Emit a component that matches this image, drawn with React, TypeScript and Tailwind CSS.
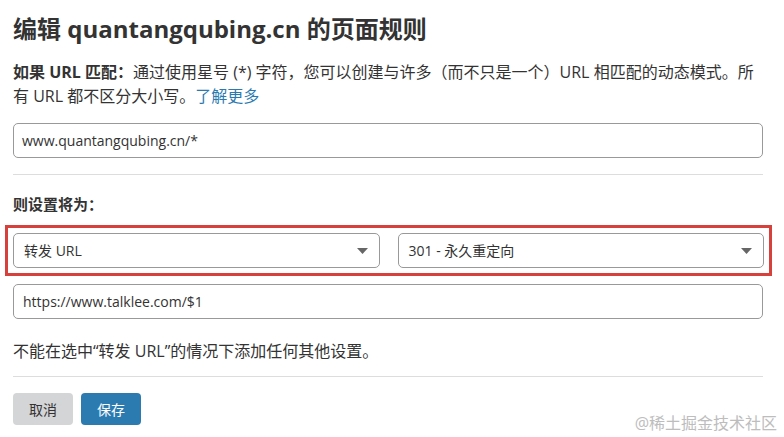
import React from "react";

const font = { fontFamily: '"Open Sans", "Noto Sans CJK SC", sans-serif' };

function Caret() {
  return (
    <svg width="11" height="6" viewBox="0 0 11 6" className="shrink-0">
      <path d="M0 0 L11 0 L5.5 6 Z" fill="#666" />
    </svg>
  );
}

function Select({ label }: { label: string }) {
  return (
    <div className="flex-1 h-[35px] rounded-[5px] border border-[#999] flex items-center justify-between pl-[10px] pr-[11px] text-[14px] text-[#333]">
      <span>{label}</span>
      <Caret />
    </div>
  );
}

export default function App() {
  return (
    <div className="relative w-[784px] h-[437px] bg-white overflow-hidden text-[#333]" style={font}>
      <div className="pl-[13px] pr-[21px] pt-[12px]">
        <h1 className="text-[24px] leading-[34px] font-bold text-[#333]">编辑 quantangqubing.cn 的页面规则</h1>
        <p className="mt-[14px] text-[16px] leading-[24px]">
          <b>如果 URL 匹配：</b>通过使用星号 (*) 字符，您可以创建与许多（而不只是一个）URL 相匹配的动态模式。所有 URL 都不区分大小写。<span className="text-[#2a7ab0]">了解更多</span>
        </p>
        <div className="mt-[15px] h-[35px] rounded-[5px] border border-[#999] flex items-center pl-[8px] text-[14px]">
          www.quantangqubing.cn/*
        </div>
        <div className="mt-[16px] border-t border-[#ddd]" />
        <div className="mt-[17px] text-[15px] leading-[24px] font-bold">则设置将为：</div>
        <div className="mt-[9px] -ml-[8px] -mr-[9px] border-[3px] border-[#d7413c] px-[5px] py-[5px] flex gap-[18px]">
          <Select label="转发 URL" />
          <Select label="301 - 永久重定向" />
        </div>
        <div className="mt-[8px] h-[35px] rounded-[5px] border border-[#999] flex items-center pl-[9px] text-[14px]">
          https://www.talklee.com/$1
        </div>
        <p className="mt-[21px] text-[16px] leading-[22px]">不能在选中“转发 URL”的情况下添加任何其他设置。</p>
        <div className="mt-[14px] border-t border-[#ddd]" />
        <div className="mt-[16px] flex gap-[8px]">
          <button className="w-[60px] h-[32px] rounded-[4px] bg-[#d4d5d7] text-[#333] text-[14px]">取消</button>
          <button className="w-[60px] h-[32px] rounded-[4px] bg-[#2b7bb1] text-white text-[14px]">保存</button>
        </div>
      </div>
      <div className="absolute right-[7px] top-[413px] text-[16px] leading-[20px] text-[#bdbdbd]">@稀土掘金技术社区</div>
    </div>
  );
}
